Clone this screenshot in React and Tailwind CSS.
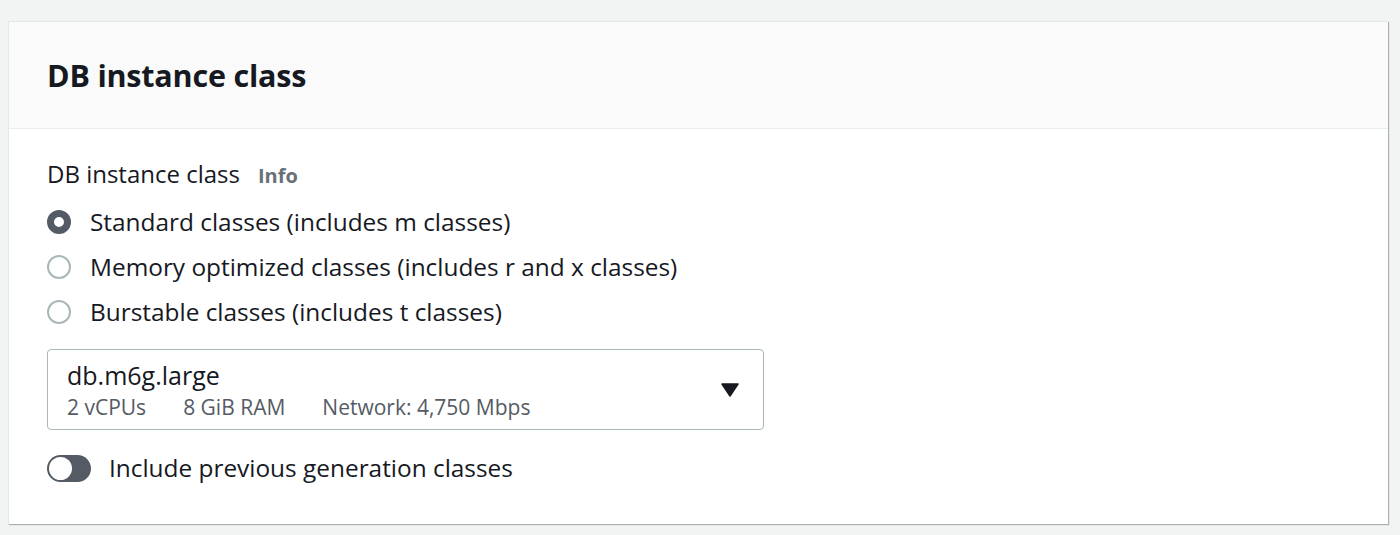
import React, { useState } from 'react';

const classes = [
  { id: 'standard', label: 'Standard classes (includes m classes)' },
  { id: 'memory', label: 'Memory optimized classes (includes r and x classes)' },
  { id: 'burstable', label: 'Burstable classes (includes t classes)' },
];

const Radio = ({ checked }) => (
  <span
    className={`inline-block w-[24px] h-[24px] rounded-full shrink-0 ${
      checked ? 'border-[7px] border-[#545b64] bg-white' : 'border-2 border-[#aab7b8] bg-white'
    }`}
  />
);

const App = () => {
  const [selected, setSelected] = useState('standard');
  const [prevGen, setPrevGen] = useState(false);

  return (
    <div className="min-h-[535px] bg-[#f2f3f3] pt-[21px] pl-[8px] pr-[12px] pb-[10px] font-['Open_Sans',sans-serif] text-[#16191f]">
      <div className="bg-white border-t border-l border-[#e4e7e7] shadow-[1px_1px_1px_0_rgba(0,28,36,0.3)] h-[503px]">
        <div className="bg-[#fafafa] border-b border-[#eaeded] h-[107px] flex items-center px-[38px]">
          <h2 className="text-[30.5px] leading-[40px] font-bold tracking-[-0.2px]">DB instance class</h2>
        </div>

        <div className="px-[38px] pt-[30px]">
          <div className="flex items-baseline gap-[18px] leading-[30px]">
            <span className="text-[24px]">DB instance class</span>
            <span className="text-[20px] font-bold text-[#687078]">Info</span>
          </div>

          <div className="mt-[8px] flex flex-col">
            {classes.map((c) => (
              <label
                key={c.id}
                className="flex items-center gap-[19px] h-[45px] cursor-pointer"
                onClick={() => setSelected(c.id)}
              >
                <Radio checked={selected === c.id} />
                <span className="text-[24.4px] leading-[30px]">{c.label}</span>
              </label>
            ))}
          </div>

          <div className="mt-[15px] w-[717px] h-[81px] border border-[#aab7b8] rounded-[4px] flex items-center justify-between pl-[19px] pr-[24px]">
            <div className="flex flex-col">
              <span className="text-[25px] leading-[30px]">db.m6g.large</span>
              <div className="mt-[4px] flex gap-[37px] text-[21px] leading-[26px] text-[#545b64]">
                <span>2 vCPUs</span>
                <span>8 GiB RAM</span>
                <span>Network: 4,750 Mbps</span>
              </div>
            </div>
            <svg width="18" height="14" viewBox="0 0 18 14">
              <path d="M1 1 H17 L9 13 Z" fill="#16191f" stroke="#16191f" strokeWidth="1.5" strokeLinejoin="round" />
            </svg>
          </div>

          <div className="mt-[23px] flex items-center gap-[18px]">
            <button
              className="relative w-[44px] h-[27px] rounded-full bg-[#545b64]"
              onClick={() => setPrevGen(!prevGen)}
            >
              <span
                className={`absolute top-[2px] w-[23px] h-[23px] rounded-full bg-white ${prevGen ? 'left-[19px]' : 'left-[2px]'}`}
              />
            </button>
            <span className="text-[24.4px] leading-[30px]">Include previous generation classes</span>
          </div>
        </div>
      </div>
    </div>
  );
};

export default App;
